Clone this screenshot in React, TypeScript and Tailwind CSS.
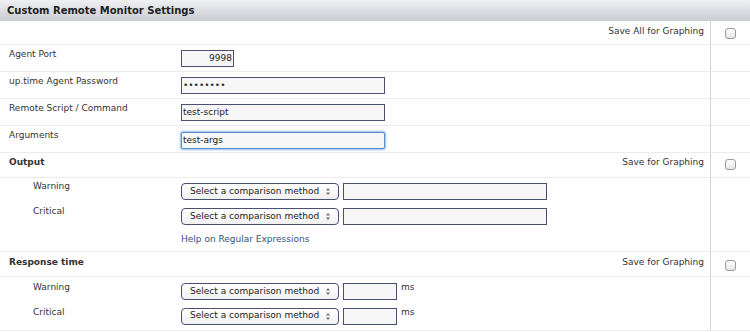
import React from "react";

const font = { fontFamily: '"DejaVu Sans", Verdana, sans-serif' };

function Check() {
  return (
    <div className="w-[11px] h-[11px] rounded-[3px] border border-[#9a9a9a] bg-gradient-to-b from-white to-[#e6e6e6]" />
  );
}

function Select() {
  return (
    <div className="w-[158px] h-[17px] rounded-[4px] border border-[#4b4f72] bg-gradient-to-b from-white to-[#f1f1f1] flex items-center pl-[8px] pr-[7px] text-[9px] text-[#222] whitespace-nowrap">
      <span className="flex-1">Select a comparison method</span>
      <svg width="6" height="9" viewBox="0 0 6 9">
        <path d="M0.8 3.6 L3 1 L5.2 3.6 Z" fill="#777" />
        <path d="M0.8 5.4 L3 8 L5.2 5.4 Z" fill="#777" />
      </svg>
    </div>
  );
}

function Row({
  children,
  right,
  className = "",
  checkTop = "pt-[7px]",
}: {
  children: React.ReactNode;
  right?: React.ReactNode;
  className?: string;
  checkTop?: string;
}) {
  return (
    <div className={`flex border-b border-[#ececec] ${className}`}>
      <div className="w-[711px] border-r border-[#d4d4e0] flex">{children}</div>
      <div className={`flex-1 flex justify-center ${checkTop}`}>{right}</div>
    </div>
  );
}

function Label({ children, indent = false, pt = "pt-[3px]" }: { children: React.ReactNode; indent?: boolean; pt?: string }) {
  return (
    <div className={`w-[181px] shrink-0 ${indent ? "pl-[33px]" : "pl-[9px]"} ${pt} text-[9px] leading-[12px] text-[#333]`}>
      {children}
    </div>
  );
}

const inputCls = "h-[17px] border border-[#4b4f72] bg-[#f7f7f7]";

export default function App() {
  return (
    <div className="w-[750px] h-[332px] bg-white" style={font}>
      <div className="h-[21px] bg-gradient-to-b from-[#eff0f2] to-[#c9ccd1] pl-[7px] flex items-center text-[10px] font-bold text-[#222]">
        Custom Remote Monitor Settings
      </div>
      <Row className="h-[24px]" right={<Check />}>
        <div className="flex-1 text-right pr-[6px] pt-[4px] text-[9px] leading-[12px] text-[#333]">Save All for Graphing</div>
      </Row>
      <Row className="h-[27px]">
        <Label>Agent Port</Label>
        <div className="pt-[5px]">
          <div className={`w-[53px] ${inputCls} text-right pr-[1px] text-[9px] text-[#222] leading-[15px]`}>9998</div>
        </div>
      </Row>
      <Row className="h-[27px]">
        <Label>up.time Agent Password</Label>
        <div className="pt-[5px]">
          <div className={`w-[204px] ${inputCls} pl-[1px] text-[9px] text-[#333] leading-[15px]`}>••••••••</div>
        </div>
      </Row>
      <Row className="h-[27px]">
        <Label>Remote Script / Command</Label>
        <div className="pt-[5px]">
          <div className={`w-[204px] ${inputCls} pl-[1px] text-[9px] text-[#222] leading-[15px]`}>test-script</div>
        </div>
      </Row>
      <Row className="h-[27px]">
        <Label>Arguments</Label>
        <div className="pt-[6px]">
          <div className="w-[204px] h-[17px] border border-[#5b8ed0] rounded-[2px] shadow-[0_0_2px_1px_rgba(110,160,225,0.7)] bg-[#f7f7f7] pl-[1px] text-[9px] text-[#222] leading-[15px]">test-args</div>
        </div>
      </Row>
      <Row className="h-[25px]" right={<Check />} checkTop="pt-[6px]">
        <div className="flex-1 flex justify-between">
          <div className="pl-[9px] pt-[3px] text-[9px] leading-[12px] font-bold text-[#333]">Output</div>
          <div className="pr-[6px] pt-[3px] text-[9px] leading-[12px] text-[#333]">Save for Graphing</div>
        </div>
      </Row>
      <Row className="h-[74px]">
        <div className="flex flex-col pt-[2px]">
          <div className="flex items-start h-[25px]">
            <Label indent pt="pt-0">Warning</Label>
            <div className="mt-[3px] flex gap-[4px]">
              <Select />
              <div className={`w-[204px] ${inputCls}`} />
            </div>
          </div>
          <div className="flex items-start h-[25px]">
            <Label indent pt="pt-0">Critical</Label>
            <div className="mt-[3px] flex gap-[4px]">
              <Select />
              <div className={`w-[204px] ${inputCls}`} />
            </div>
          </div>
          <div className="pl-[181px] pt-[3px] text-[9px] leading-[12px] text-[#36507a]">Help on Regular Expressions</div>
        </div>
      </Row>
      <Row className="h-[25px]" right={<Check />} checkTop="pt-[8px]">
        <div className="flex-1 flex justify-between">
          <div className="pl-[9px] pt-[4px] text-[9px] leading-[12px] font-bold text-[#333]">Response time</div>
          <div className="pr-[6px] pt-[4px] text-[9px] leading-[12px] text-[#333]">Save for Graphing</div>
        </div>
      </Row>
      <Row className="h-[54px]">
        <div className="flex flex-col pt-[4px]">
          <div className="flex items-start h-[25px]">
            <Label indent pt="pt-0">Warning</Label>
            <div className="mt-[2px] flex items-start gap-[4px]">
              <Select />
              <div className={`w-[54px] ${inputCls}`} />
              <div className="text-[9px] leading-[12px] text-[#333] mt-[-2px]">ms</div>
            </div>
          </div>
          <div className="flex items-start h-[25px]">
            <Label indent pt="pt-0">Critical</Label>
            <div className="mt-[2px] flex items-start gap-[4px]">
              <Select />
              <div className={`w-[54px] ${inputCls}`} />
              <div className="text-[9px] leading-[12px] text-[#333] mt-[-2px]">ms</div>
            </div>
          </div>
        </div>
      </Row>
    </div>
  );
}
